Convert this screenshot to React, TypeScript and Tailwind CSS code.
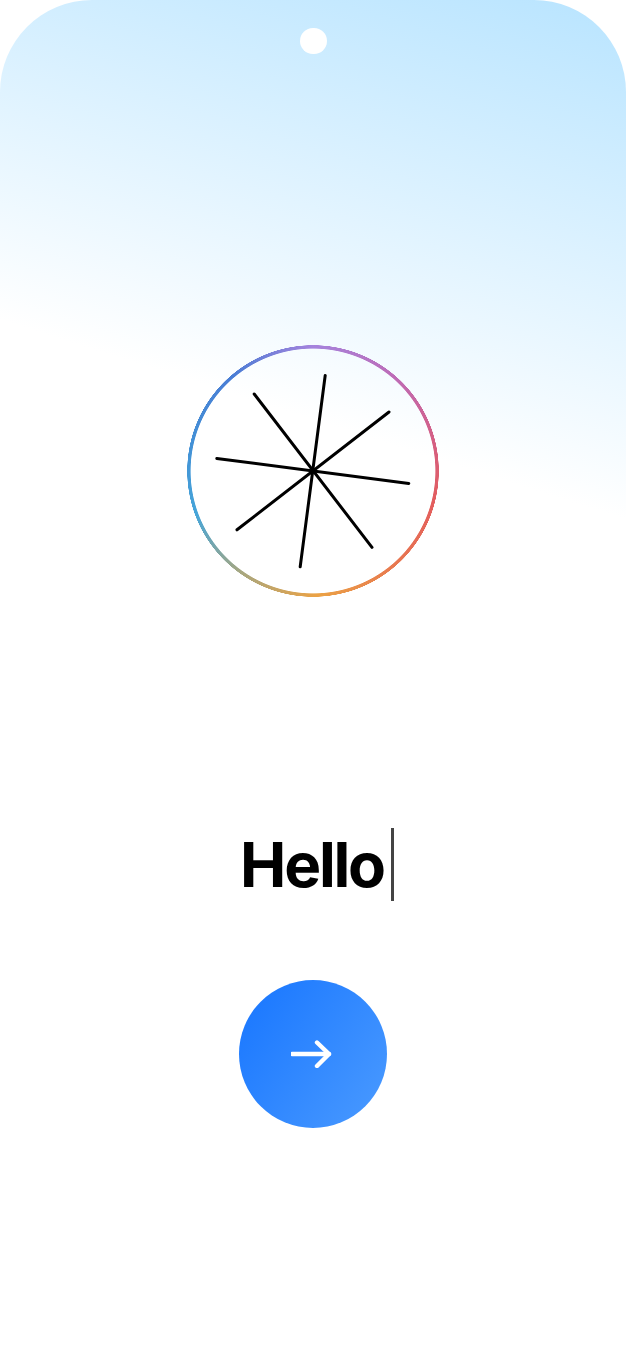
export default function App() {
  return (
    <div className="flex min-h-[1366px] w-full flex-col items-center overflow-hidden rounded-t-[92px] bg-[linear-gradient(17.7deg,#ffffff_66.8%,#b8e4ff_100%)] pt-7 font-['Inter','Liberation_Sans',sans-serif]">
      {/* camera hole */}
      <div className="h-[26px] w-[27px] rounded-full bg-white" />

      {/* dial */}
      <div className="relative mt-[291px] size-[252px] shrink-0">
        <div className="absolute inset-0 bg-[conic-gradient(from_0deg,#a583dd_0deg,#bd6cb8_40deg,#d45f85_75deg,#e35d5d_105deg,#e8794f_140deg,#eba245_178deg,#a8a77f_215deg,#46a5d9_250deg,#4392d6_280deg,#4a7dd5_320deg,#a583dd_360deg)] [mask-image:radial-gradient(closest-side,transparent_calc(100%-4px),black_calc(100%-3.2px),black_calc(100%-0.4px),transparent_100%)]" />
        <svg viewBox="0 0 252 252" className="absolute inset-0 size-full" fill="none" stroke="#000" strokeWidth="3" strokeLinecap="round">
          <path d="M138.2 30.5 L113.2 221.8" />
          <path d="M202 67 L50 184.8" />
          <path d="M67.2 49 L185 202.4" />
          <path d="M29.8 113.4 L221.8 138.4" />
          <circle cx="126" cy="126" r="2.6" fill="#000" stroke="none" />
        </svg>
      </div>

      {/* greeting */}
      <div className="mt-[231px] flex h-[73px] items-center pl-2">
        <span className="text-[62px] leading-none font-bold tracking-[-2.2px] text-black">Hello</span>
        <span className="ml-[7px] h-[73px] w-[3px] bg-[#444444]" />
      </div>

      {/* next button */}
      <button className="mt-[79px] flex size-[148px] items-center justify-center rounded-full bg-[linear-gradient(125deg,#1c79ff_10%,#4395ff_85%)]">
        <svg width="44" height="28" viewBox="0 0 44 28" fill="none" stroke="#fff" strokeWidth="4.4" strokeLinecap="round" strokeLinejoin="round">
          <path d="M1 14 H38" />
          <path d="M26 2.5 L38 14 L26 26" />
        </svg>
      </button>
    </div>
  );
}
